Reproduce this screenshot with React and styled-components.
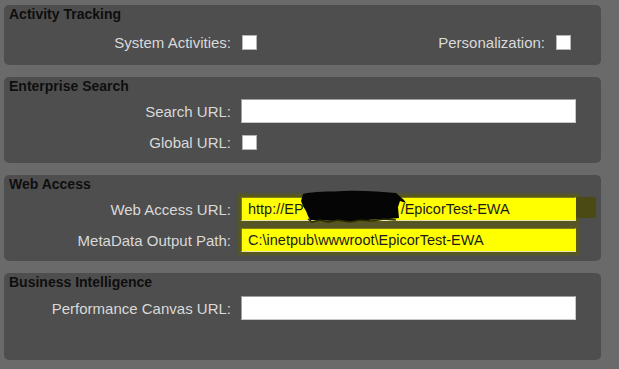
import React from "react";
import styled, { createGlobalStyle } from "styled-components";

const GlobalStyle = createGlobalStyle`
  html, body {
    margin: 0;
    padding: 0;
    background: #6a6a6a;
    font-family: "Liberation Sans", Arial, sans-serif;
  }
`;

const Page = styled.div`
  width: 619px;
  height: 369px;
  box-sizing: border-box;
  padding: 5px 18px 0 4px;
  display: flex;
  flex-direction: column;
  gap: 12px;
  overflow: hidden;
`;

const Panel = styled.section`
  height: ${(p) => p.$h}px;
  box-sizing: border-box;
  background: #4e4e4e;
  border-radius: 5px;
  padding: 1px 5px 0;
  flex-shrink: 0;
`;

const Title = styled.div`
  font-weight: 700;
  font-size: 14px;
  line-height: 16px;
  color: #0e0e0e;
`;

const Rows = styled.div`
  display: grid;
  grid-template-columns: 222px 335px;
  grid-auto-rows: 24px;
  column-gap: 10px;
  row-gap: 7px;
  align-items: center;
  margin-top: ${(p) => p.$offset}px;
`;

const Label = styled.div`
  text-align: right;
  font-size: 15px;
  color: #d9d9d9;
  white-space: nowrap;
`;

const Inline = styled.div`
  display: flex;
  align-items: center;
  padding-right: 5px;
`;

const Spacer = styled.div`
  flex: 1;
`;

const InlineLabel = styled(Label)`
  margin-right: 11px;
`;

const Check = styled.div`
  width: 13px;
  height: 13px;
  margin-left: ${(p) => p.$ml || 0}px;
  background: #ffffff;
  border: 1px solid #b5b5b5;
`;

const Field = styled.div`
  position: relative;
  height: 24px;
  box-sizing: border-box;
  display: flex;
  align-items: center;
  padding-left: 6px;
  font-size: 14.5px;
  color: #1c1c1c;
  white-space: nowrap;
  background: ${(p) => (p.$highlight ? "#ffff00" : "#ffffff")};
  border: 1px solid;
  border-color: ${(p) =>
    p.$highlight ? "#7d7d1c #e4e4b0 #e4e4b0 #7d7d1c" : "#9f9f9f #c8c8c8 #c8c8c8 #9f9f9f"};
  box-shadow: ${(p) =>
    p.$highlight ? "0 0 2px 3px rgba(92, 92, 10, 0.75)" : "none"};

  &::after {
    content: "";
    display: ${(p) => (p.$tail ? "block" : "none")};
    position: absolute;
    left: calc(100% + 1px);
    top: -1px;
    width: 20px;
    height: 21px;
    background: #4b4a14;
    border-radius: 2px;
  }
`;

const Redaction = styled.svg`
  flex-shrink: 0;
  margin: -6px -5px 0 -4px;
  display: block;
`;

function Scribble() {
  return (
    <Redaction width="106" height="34" viewBox="0 0 106 34">
      <path
        d="M3 5 C14 2 30 3 44 2 C62 1 80 3 96 4 L104 11 L106 14 L100 12 L98 18 L99 29 C86 31 70 30 56 32 C40 33 24 31 10 31 L8 27 L6 22 L3 17 L1 12 Z"
        fill="#050505"
      />
      <path
        d="M8 30 L12 33 L20 31 L28 33 L38 31 L50 33 L60 31 L72 32 L84 30 L96 31"
        stroke="#2a2a00"
        strokeWidth="1.5"
        fill="none"
      />
    </Redaction>
  );
}

export default function App() {
  return (
    <>
      <GlobalStyle />
      <Page>
        <Panel $h={60}>
          <Title>Activity Tracking</Title>
          <Rows $offset={8}>
            <Label>System Activities:</Label>
            <Inline>
              <Check $ml={1} />
              <Spacer />
              <InlineLabel>Personalization:</InlineLabel>
              <Check />
            </Inline>
          </Rows>
        </Panel>

        <Panel $h={86}>
          <Title>Enterprise Search</Title>
          <Rows $offset={5}>
            <Label>Search URL:</Label>
            <Field />
            <Label>Global URL:</Label>
            <Inline>
              <Check $ml={1} />
            </Inline>
          </Rows>
        </Panel>

        <Panel $h={86}>
          <Title>Web Access</Title>
          <Rows $offset={5}>
            <Label>Web Access URL:</Label>
            <Field $highlight $tail>
              http://EP
              <Scribble />
              /EpicorTest-EWA
            </Field>
            <Label>MetaData Output Path:</Label>
            <Field $highlight>C:\inetpub\wwwroot\EpicorTest-EWA</Field>
          </Rows>
        </Panel>

        <Panel $h={87}>
          <Title>Business Intelligence</Title>
          <Rows $offset={6}>
            <Label>Performance Canvas URL:</Label>
            <Field />
          </Rows>
        </Panel>
      </Page>
    </>
  );
}
